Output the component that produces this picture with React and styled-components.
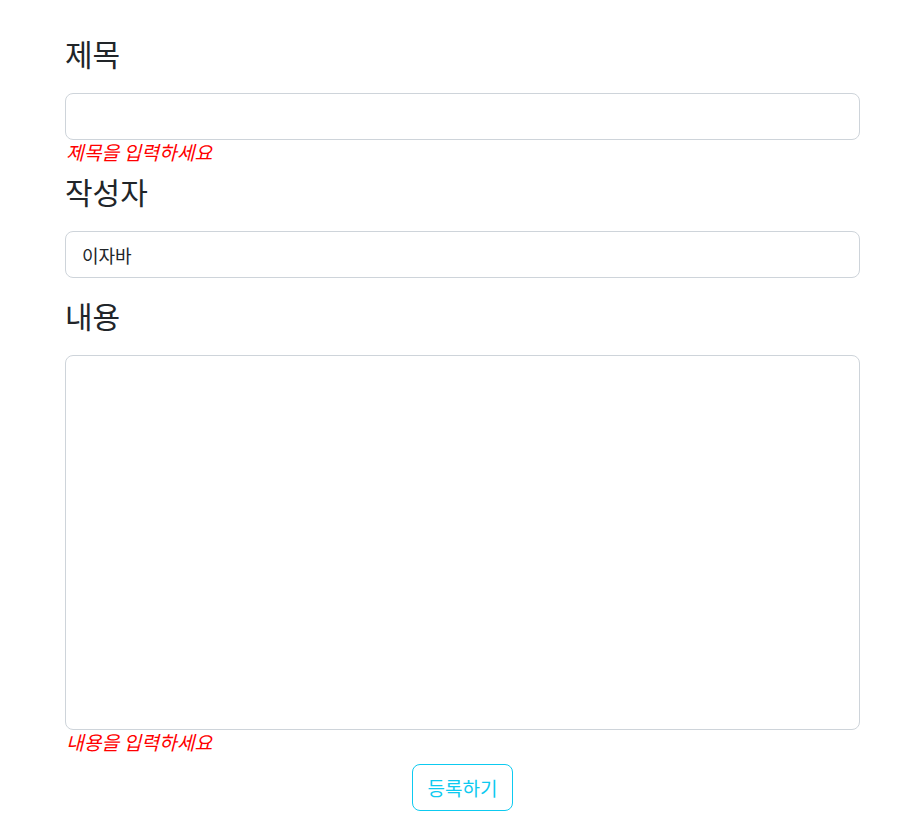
import React from 'react'
import styled, { createGlobalStyle } from 'styled-components'

const GlobalStyle = createGlobalStyle`
    body {
        margin: 0;
        background: #fff;
        color: #212529;
        font-family: "Noto Sans CJK KR", "Noto Sans", sans-serif;
    }
`

export default function App() {
    return (
        <>
            <GlobalStyle />
            <Form onSubmit={(e) => e.preventDefault()}>
                <Group>
                    <Label>제목</Label>
                    <Input type="text" />
                    <Error>제목을 입력하세요</Error>
                </Group>
                <Group>
                    <Label>작성자</Label>
                    <Input type="text" defaultValue="이자바" />
                </Group>
                <Group>
                    <Label>내용</Label>
                    <TextArea />
                    <Error>내용을 입력하세요</Error>
                </Group>
                <Actions>
                    <SubmitButton type="submit">등록하기</SubmitButton>
                </Actions>
            </Form>
        </>
    )
}

const Form = styled.form`
    display: flex;
    flex-direction: column;
    width: 795px;
    margin-left: 65px;
    padding-top: 35px;
`

const Group = styled.div`
    display: flex;
    flex-direction: column;
    margin-bottom: 19px;
`

const Label = styled.h3`
    margin: 0 0 22px;
    font-size: 30px;
    font-weight: 400;
    line-height: 36px;
`

const Input = styled.input`
    box-sizing: border-box;
    height: 47px;
    padding: 0 16px;
    border: 1px solid #ced4da;
    border-radius: 8px;
    font-family: inherit;
    font-size: 18px;
    color: #212529;
    outline: none;
`

const TextArea = styled.textarea`
    box-sizing: border-box;
    height: 375px;
    padding: 10px 16px;
    border: 1px solid #ced4da;
    border-radius: 8px;
    font-family: inherit;
    font-size: 18px;
    resize: none;
    outline: none;
`

const Error = styled.span`
    margin: 0 0 -10px 1px;
    font-size: 19.3px;
    font-style: italic;
    line-height: 24px;
    color: #ff0000;
`

const Actions = styled.div`
    display: flex;
    justify-content: center;
    margin-top: 1px;
`

const SubmitButton = styled.button`
    box-sizing: border-box;
    height: 47px;
    padding: 0 14.5px;
    background: #fff;
    border: 1px solid #0dcaf0;
    border-radius: 8px;
    color: #0dcaf0;
    font-family: inherit;
    font-size: 19px;
    cursor: pointer;
`
